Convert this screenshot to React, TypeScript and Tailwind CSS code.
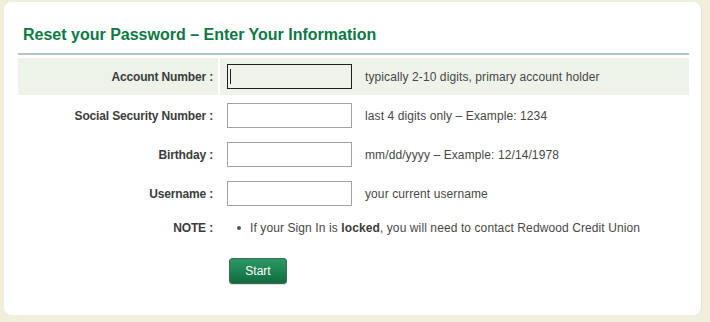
import type { ReactNode } from 'react'

const FONT = { fontFamily: '"Liberation Sans", Arial, sans-serif' }

const FIELDS = [
  { label: 'Account Number :', help: 'typically 2-10 digits, primary account holder', focused: true },
  { label: 'Social Security Number :', help: 'last 4 digits only – Example: 1234' },
  { label: 'Birthday :', help: 'mm/dd/yyyy – Example: 12/14/1978' },
  { label: 'Username :', help: 'your current username' },
]

function Row({ label, children, active, tall = true }: { label: string; children: ReactNode; active?: boolean; tall?: boolean }) {
  const bg = active ? 'bg-[#eef3e9]' : 'bg-white'
  return (
    <>
      <div className={`${bg} ${tall ? 'h-[37px]' : 'h-[28px]'} flex items-center justify-end pr-[5px]
                       text-[12px] font-bold tracking-[-0.15px] text-[#3c3c3c]`}>
        {label}
      </div>
      <div className={`${bg} ${tall ? 'h-[37px]' : 'h-[28px]'} flex items-center pl-[7px]`}>
        {children}
      </div>
    </>
  )
}

export default function App() {
  return (
    <div className="min-h-screen bg-[#efefdc] pt-[2px] pl-[4px]" style={FONT}>
      <div className="w-[698px] h-[313px] bg-white rounded-[8px] border-r border-[#e3e3c9] pl-[14px] pr-[12px] pt-[23px]">

        {/* heading */}
        <h1 className="pl-[5px] pb-[8px] text-[16px] leading-[20px] font-bold text-[#0c7846] border-b-2 border-[#b3c6bd]">
          Reset your Password – Enter Your Information
        </h1>

        {/* form grid */}
        <div className="mt-[3px] grid grid-cols-[200px_1fr] gap-[2px]">
          {FIELDS.map((f) => (
            <Row key={f.label} label={f.label} active={f.focused}>
              <div className="relative">
                <input
                  type="text"
                  className={`block w-[125px] h-[25px] bg-transparent outline-none border
                              ${f.focused ? 'border-[#1e1e1e]' : 'border-[#a2a2a2]'}`}
                />
                {f.focused && <span className="absolute left-[3px] top-[5px] w-px h-[15px] bg-[#222]" />}
              </div>
              <span className="ml-[13px] text-[12px] tracking-[0.1px] text-[#474747]">{f.help}</span>
            </Row>
          ))}

          <Row label="NOTE :" tall={false}>
            <div className="flex items-center text-[12px] tracking-[0.1px] text-[#474747]">
              <span className="ml-[10px] w-[4px] h-[4px] rounded-full bg-[#555]" />
              <span className="ml-[9px]">
                If your Sign In is <b className="text-[#3c3c3c]">locked</b>, you will need to contact Redwood Credit Union
              </span>
            </div>
          </Row>
        </div>

        {/* action */}
        <div className="pl-[211px] pt-[16px]">
          <button
            className="w-[58px] h-[26px] rounded-[3px] border border-[#3d6a52] text-white text-[12px]
                       bg-gradient-to-b from-[#2b9a64] to-[#0e6c3f] shadow-[0_1px_1px_rgba(0,0,0,0.15)]"
          >
            Start
          </button>
        </div>
      </div>
    </div>
  )
}
